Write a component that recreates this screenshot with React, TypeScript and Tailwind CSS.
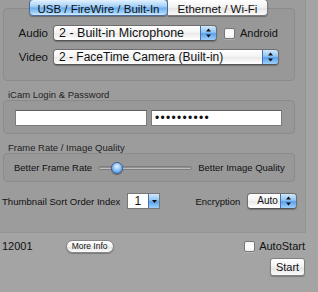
import React from "react";

function Arrows() {
  return (
    <svg width="7" height="10" viewBox="0 0 7 10" className="block">
      <path d="M3.5 0.5 L6 3.5 L1 3.5 Z" fill="#111" />
      <path d="M3.5 9.5 L6 6.5 L1 6.5 Z" fill="#111" />
    </svg>
  );
}

function Popup({ text, width, size = "text-[12px]" }: { text: string; width: string; size?: string }) {
  return (
    <div
      className={`${width} h-[16px] flex rounded-[4px] border border-[#6e6e6e] border-b-[#555] overflow-hidden shadow-[0_1px_1px_rgba(0,0,0,0.25)]`}
    >
      <div className={`flex-1 min-w-0 bg-[linear-gradient(#ffffff,#f3f3f3_50%,#e9e9e9_51%,#ffffff)] pl-[5px] ${size} leading-[14px] text-[#111] whitespace-nowrap overflow-hidden`}>
        {text}
      </div>
      <div className="w-[16px] border-l border-[#4a6fa8] bg-[linear-gradient(#d2e8fc,#8fc3f3_45%,#5aa2ec_55%,#9fd0fa)] flex items-center justify-center">
        <Arrows />
      </div>
    </div>
  );
}

function Checkbox() {
  return (
    <div className="w-[11px] h-[11px] rounded-[2px] border border-[#777] bg-[linear-gradient(#f5f5f5,#ffffff_60%,#eeeeee)] shadow-[0_1px_0_rgba(255,255,255,0.2)]" />
  );
}

export default function App() {
  return (
    <div className="w-[318px] h-[292px] bg-[#a4a4a4] overflow-hidden font-['Liberation_Sans',Arial,sans-serif] text-[#111]">
      <div className="w-[306px] h-[234px] bg-[#9c9c9c] border-r border-b border-[#959595] pl-[3px]">
        {/* tabs */}
        <div className="relative z-10 flex h-[17px] -mt-[1px] pl-[26px]">
          <div className="w-[139px] h-[17px] rounded-[4px] border border-[#4c6c9e] bg-[linear-gradient(#e3f1fd,#a9d3f8_40%,#6fb1ef_55%,#9fd1fa_85%,#d6ecfd)] text-[11.5px] leading-[16px] text-center whitespace-nowrap pt-[1px] shadow-[0_1px_1px_rgba(0,0,0,0.3)]">
            USB / FireWire / Built-In
          </div>
          <div className="w-[100px] h-[17px] rounded-r-[4px] border border-l-0 border-[#7a7a7a] bg-[linear-gradient(#ffffff,#f1f1f1_50%,#e4e4e4_55%,#fafafa)] text-[11.5px] leading-[16px] text-center whitespace-nowrap pt-[1px] shadow-[0_1px_1px_rgba(0,0,0,0.3)]">
            Ethernet / Wi-Fi
          </div>
        </div>
        {/* box 1 */}
        <div className="-mt-[8px] w-[292px] h-[73px] rounded-[4px] border border-[#8b8b8b] bg-[#989898] pt-[16px]">
          <div className="flex items-center h-[16px]">
            <div className="w-[44px] text-right text-[11.5px] leading-[14px]">Audio</div>
            <div className="ml-[5px]">
              <Popup text="2 - Built-in Microphone" width="w-[164px]" size="text-[12.5px]" />
            </div>
            <div className="ml-[7px]">
              <Checkbox />
            </div>
            <div className="ml-[5px] text-[11px] leading-[14px]">Android</div>
          </div>
          <div className="flex items-center h-[16px] mt-[8px]">
            <div className="w-[44px] text-right text-[11.5px] leading-[14px]">Video</div>
            <div className="ml-[5px]">
              <Popup text="2 - FaceTime Camera (Built-in)" width="w-[226px]" />
            </div>
          </div>
        </div>
        {/* iCam login */}
        <div className="mt-[9px] h-[10px] pl-[5px] text-[9.5px] leading-[10px] text-[#222]">iCam Login &amp; Password</div>
        <div className="w-[292px] h-[34px] rounded-[4px] border border-[#8b8b8b] bg-[#989898] pl-[11px] pt-[9px] flex gap-[4px]">
          <div className="w-[132px] h-[16px] bg-white border border-[#7c7c7c] border-t-[#5e5e5e]" />
          <div className="w-[131px] h-[16px] bg-white border border-[#7c7c7c] border-t-[#5e5e5e] pl-[3px] text-[12px] leading-[14px] tracking-[1.3px]">
            ••••••••••
          </div>
        </div>
        {/* frame rate */}
        <div className="mt-[8px] h-[11px] pl-[5px] text-[9.5px] leading-[11px] text-[#222]">Frame Rate / Image Quality</div>
        <div className="w-[292px] h-[29px] rounded-[4px] border border-[#8b8b8b] bg-[#989898] pl-[10px] flex items-center">
          <div className="text-[9.5px] leading-[11px] whitespace-nowrap">Better Frame Rate</div>
          <div className="relative ml-[6px] w-[94px] h-[12px] flex items-center">
            <div className="w-full h-[4px] rounded-full bg-[#c4c4c4] border border-[#7d7d7d] shadow-[inset_0_1px_1px_rgba(0,0,0,0.3)]" />
            <div className="absolute left-[13px] top-0 w-[12px] h-[12px] rounded-full border border-[#3d5f9a] bg-[radial-gradient(circle_at_50%_35%,#e6f3ff,#7db9f2_55%,#3e86dd)] shadow-[0_1px_1px_rgba(0,0,0,0.35)]" />
          </div>
          <div className="ml-[6px] text-[9.5px] leading-[11px] whitespace-nowrap">Better Image Quality</div>
        </div>
        {/* thumbnail row */}
        <div className="-ml-[1px] mt-[11px] h-[16px] flex items-center">
          <div className="text-[9.6px] leading-[11px] whitespace-nowrap">Thumbnail Sort Order Index</div>
          <div className="ml-[7px] w-[33px] h-[16px] flex border border-[#777] bg-white">
            <div className="flex-1 pl-[6px] text-[12px] leading-[14px]">1</div>
            <div className="w-[11px] border-l border-[#4a6fa8] bg-[linear-gradient(#d2e8fc,#8fc3f3_45%,#5aa2ec_55%,#9fd0fa)] flex items-center justify-center">
              <svg width="5" height="3" viewBox="0 0 5 3" className="block">
                <path d="M0 0 L5 0 L2.5 3 Z" fill="#111" />
              </svg>
            </div>
          </div>
          <div className="ml-[35px] text-[9.5px] leading-[11px]">Encryption</div>
          <div className="ml-[7px]">
            <Popup text="Auto" width="w-[50px]" size="text-[10px] pl-[9px]" />
          </div>
        </div>
      </div>
      {/* bottom */}
      <div className="w-[306px] flex items-center h-[13px] mt-[7px]">
        <div className="ml-[2px] text-[11px] leading-[13px]">12001</div>
        <div className="ml-[33px] w-[48px] h-[13px] rounded-full border border-[#858585] bg-[linear-gradient(#ffffff,#f2f2f2_50%,#e4e4e4_55%,#fbfbfb)] text-[8.5px] leading-[11px] text-center shadow-[0_1px_1px_rgba(0,0,0,0.25)]">
          More Info
        </div>
        <div className="ml-auto">
          <Checkbox />
        </div>
        <div className="ml-[4px] mr-[1px] text-[11px] leading-[13px]">AutoStart</div>
      </div>
      <div className="w-[306px] flex justify-end mt-[5px] pr-[1px]">
        <div className="w-[35px] h-[18px] rounded-[3px] border border-[#808080] bg-[linear-gradient(#ffffff,#f2f2f2_50%,#e4e4e4_55%,#fbfbfb)] text-[11px] leading-[16px] text-center shadow-[0_1px_1px_rgba(0,0,0,0.25)]">
          Start
        </div>
      </div>
    </div>
  );
}
